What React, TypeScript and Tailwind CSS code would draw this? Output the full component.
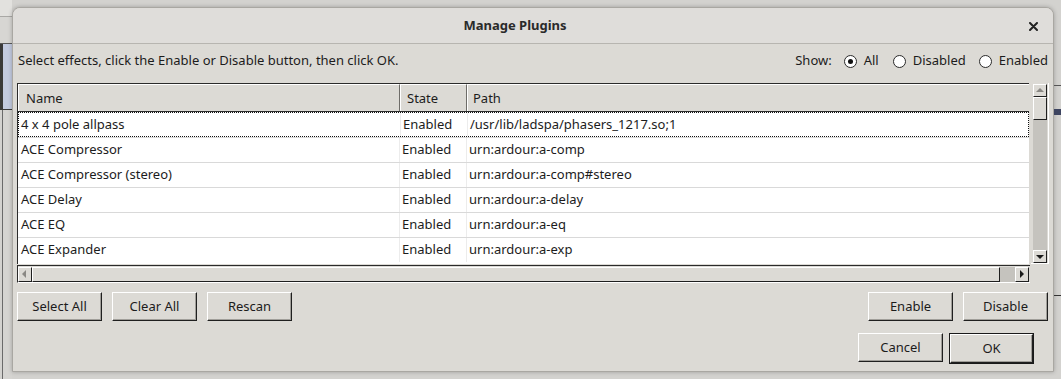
import React from 'react';

const rows = [
  { name: '4 x 4 pole allpass', state: 'Enabled', path: '/usr/lib/ladspa/phasers_1217.so;1' },
  { name: 'ACE Compressor', state: 'Enabled', path: 'urn:ardour:a-comp' },
  { name: 'ACE Compressor (stereo)', state: 'Enabled', path: 'urn:ardour:a-comp#stereo' },
  { name: 'ACE Delay', state: 'Enabled', path: 'urn:ardour:a-delay' },
  { name: 'ACE EQ', state: 'Enabled', path: 'urn:ardour:a-eq' },
  { name: 'ACE Expander', state: 'Enabled', path: 'urn:ardour:a-exp' },
];

// Raised GTK-style push button
function Btn({ label, w = 'w-[85px]', isDefault = false }: { label: string; w?: string; isDefault?: boolean }) {
  return (
    <div className={isDefault ? 'border border-[#1a1a1a]' : ''}>
      <button
        className={
          'h-[29px] flex items-center justify-center bg-[#dcdad5] border border-t-white border-l-white border-b-[#1f1f1f] border-r-[#1f1f1f] shadow-[inset_-1px_-1px_0_#a09e99] text-[13px] text-[#1c1c1c] ' +
          (isDefault ? 'w-[83px] h-[27px]' : w)
        }
      >
        {label}
      </button>
    </div>
  );
}

function Radio({ label, checked = false }: { label: string; checked?: boolean }) {
  return (
    <div className="flex items-center gap-[7px]">
      <span className="w-[13px] h-[13px] rounded-full border border-[#2a2a2a] bg-white flex items-center justify-center">
        {checked && <span className="w-[5px] h-[5px] rounded-full bg-[#111]" />}
      </span>
      <span>{label}</span>
    </div>
  );
}

// little arrow buttons used by the scrollbars
function ArrowBtn({ dir }: { dir: 'up' | 'down' }) {
  const pts = dir === 'up' ? '1,6 5,2 9,6' : '1,3 5,7 9,3';
  return (
    <div className="w-[14px] h-[13px] bg-[#dcdad5] border border-t-white border-l-white border-b-[#1f1f1f] border-r-[#1f1f1f] flex items-center justify-center">
      <svg width="10" height="10" viewBox="0 0 10 10">
        <polygon points={pts} fill={dir === 'up' ? '#8a8884' : '#1a1a1a'} />
      </svg>
    </div>
  );
}

function PluginList() {
  return (
    <div className="flex flex-col">
      <div className="flex">
        {/* list body */}
        <div className="w-[1012px] h-[181px] border-t border-l border-[#2b2b2b] bg-white flex flex-col">
          <div className="h-[28px] flex bg-[#dcdad5] border-b border-[#2b2b2b] shrink-0">
            <div className="w-[382px] border-t border-l border-white border-r border-r-[#6e6c68] pl-[7px] pt-[1px] flex items-center">Name</div>
            <div className="w-[67px] border-t border-l border-white border-r border-r-[#6e6c68] pl-[6px] pt-[1px] flex items-center">State</div>
            <div className="flex-1 border-t border-l border-white pl-[5px] pt-[1px] flex items-center">Path</div>
          </div>
          {rows.map((r, i) => (
            <div
              key={r.name}
              className={
                'h-[25px] flex shrink-0 ' +
                (i === 0 ? 'border border-dotted border-[#111]' : 'border-t border-[#d9d9d9]')
              }
            >
              <div className={'w-[382px] flex items-center border-r border-[#ececec] ' + (i === 0 ? 'pl-[2px]' : 'pl-[3px]')}>{r.name}</div>
              <div className="w-[67px] flex items-center pl-[2px] border-r border-[#ececec]">{r.state}</div>
              <div className="flex-1 flex items-center pl-[2px]">{r.path}</div>
            </div>
          ))}
        </div>
        {/* vertical scrollbar */}
        <div className="ml-[2px] w-[18px] h-[181px] border-r border-b border-white flex flex-col items-center pt-[1px]">
          <ArrowBtn dir="up" />
          <div className="w-[14px] flex-1 bg-[#c5c3be] flex flex-col">
            <div className="h-[23px] bg-[#dcdad5] border border-t-white border-l-white border-b-[#1f1f1f] border-r-[#1f1f1f]" />
          </div>
          <ArrowBtn dir="down" />
        </div>
      </div>
      {/* horizontal scrollbar */}
      <div className="mt-[1px] w-[1013px] h-[18px] border-t border-[#2b2b2b] border-l border-l-[#2b2b2b] border-b border-b-white flex items-center">
        <div className="h-[15px] flex items-stretch">
          <div className="w-[14px] bg-[#dcdad5] border border-t-white border-l-white border-b-[#1f1f1f] border-r-[#1f1f1f] flex items-center justify-center">
            <svg width="10" height="10" viewBox="0 0 10 10"><polygon points="6,1 2,5 6,9" fill="#8a8884" /></svg>
          </div>
          <div className="w-[968px] bg-[#dcdad5] border border-t-white border-l-white border-b-[#1f1f1f] border-r-[#1f1f1f]" />
          <div className="w-[15px] bg-[#c5c3be]" />
          <div className="w-[14px] bg-[#dcdad5] border border-t-white border-l-white border-b-[#1f1f1f] border-r-[#1f1f1f] flex items-center justify-center">
            <svg width="10" height="10" viewBox="0 0 10 10"><polygon points="3,1 7,5 3,9" fill="#1a1a1a" /></svg>
          </div>
        </div>
      </div>
    </div>
  );
}

function Dialog() {
  return (
    <div className="w-[1042px] h-[365px] bg-[#dcdad5] rounded-t-[8px] border border-[#a9a7a2] shadow-[0_0_4px_rgba(0,0,0,0.25)] flex flex-col overflow-hidden">
      {/* title bar */}
      <div className="h-[36px] shrink-0 bg-[#dfddda] border-b border-[#b7b5b0] flex items-center pt-[1px]">
        <div className="flex-1 text-center font-bold text-[13px] text-[#2a2a2a] pl-[4px]">Manage Plugins</div>
        <div className="w-[40px] flex items-center justify-center">
          <svg width="9" height="9" viewBox="0 0 9 9">
            <path d="M1 1 L8 8 M8 1 L1 8" stroke="#222" strokeWidth="2" strokeLinecap="round" />
          </svg>
        </div>
      </div>

      <div className="flex flex-col px-[4px] pt-[8px]">
        <div className="h-[18px] flex items-center justify-between pl-[1px] pr-[1px]">
          <span>Select effects, click the Enable or Disable button, then click OK.</span>
          <div className="flex items-center">
            <span className="mr-[12px]">Show:</span>
            <Radio label="All" checked />
            <div className="w-[14px]" />
            <Radio label="Disabled" />
            <div className="w-[13px]" />
            <Radio label="Enabled" />
          </div>
        </div>

        <div className="mt-[13px]">
          <PluginList />
        </div>

        <div className="mt-[9px] flex items-center">
          <div className="flex gap-[10px]">
            <Btn label="Select All" />
            <Btn label="Clear All" />
            <Btn label="Rescan" />
          </div>
          <div className="ml-auto flex gap-[10px] pr-[1px]">
            <Btn label="Enable" />
            <Btn label="Disable" />
          </div>
        </div>

        <div className="mt-[12px] flex justify-end gap-[6px] pr-[15px]">
          <Btn label="Cancel" />
          <Btn label="OK" isDefault />
        </div>
      </div>
    </div>
  );
}

export default function App() {
  return (
    <div className="w-[1061px] h-[379px] bg-[#d3d2cf] flex overflow-hidden text-[13px] text-[#1c1c1c] font-['Noto_Sans',sans-serif]">
      {/* parts of the main window behind the dialog */}
      <div className="w-[12px] shrink-0 flex flex-col">
        <div className="h-[17px] bg-[#e2e1de] border-b border-[#a9a8a5]" />
        <div className="h-[27px] bg-[#d7d6d3] border-b border-[#5a5a5a]" />
        <div className="h-[66px] bg-[#c3cbe0] border-l-[3px] border-[#3a3a3a] border-b border-b-[#3a3a3a]" />
        <div className="flex-1 bg-[#d5d4d1] border-l border-[#6a6a6a] ml-[2px]" />
      </div>
      <div className="flex flex-col pt-[7px]">
        <Dialog />
      </div>
      <div className="flex-1 flex flex-col">
        <div className="h-[85px]" />
        <div className="h-[1px] bg-[#555]" />
        <div className="h-[23px]" />
        <div className="h-[6px] bg-[#3d4460]" />
        <div className="h-[180px]" />
        <div className="h-[1px] bg-[#333]" />
      </div>
    </div>
  );
}
